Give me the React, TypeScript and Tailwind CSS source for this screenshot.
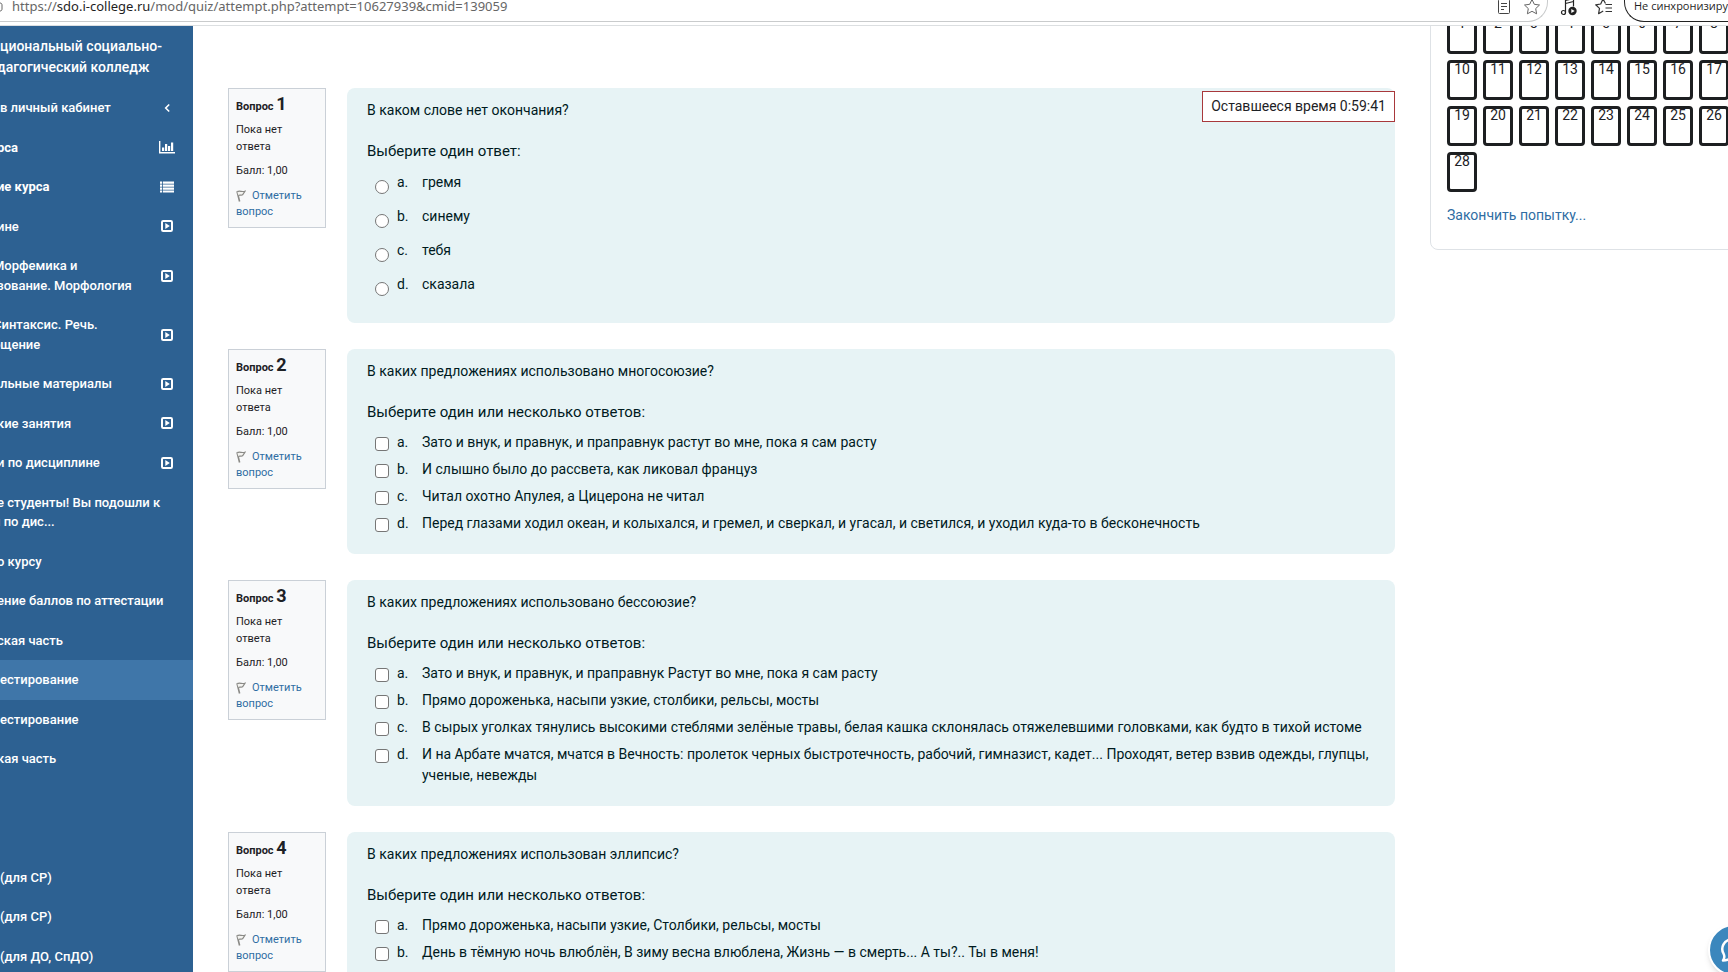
import React from "react";

type Option = { letter: string; text: string };
type Question = {
  number: number;
  kind: "radio" | "checkbox";
  text: string;
  prompt: string;
  options: Option[];
};

const ONE = "Выберите один ответ:";
const MANY = "Выберите один или несколько ответов:";

const questions: Question[] = [
  {
    number: 1,
    kind: "radio",
    text: "В каком слове нет окончания?",
    prompt: ONE,
    options: [
      { letter: "a.", text: "гремя" },
      { letter: "b.", text: "синему" },
      { letter: "c.", text: "тебя" },
      { letter: "d.", text: "сказала" },
    ],
  },
  {
    number: 2,
    kind: "checkbox",
    text: "В каких предложениях использовано многосоюзие?",
    prompt: MANY,
    options: [
      { letter: "a.", text: "Зато и внук, и правнук, и праправнук растут во мне, пока я сам расту" },
      { letter: "b.", text: "И слышно было до рассвета, как ликовал француз" },
      { letter: "c.", text: "Читал охотно Апулея, а Цицерона не читал" },
      {
        letter: "d.",
        text: "Перед глазами ходил океан, и колыхался, и гремел, и сверкал, и угасал, и светился, и уходил куда-то в бесконечность",
      },
    ],
  },
  {
    number: 3,
    kind: "checkbox",
    text: "В каких предложениях использовано бессоюзие?",
    prompt: MANY,
    options: [
      { letter: "a.", text: "Зато и внук, и правнук, и праправнук Растут во мне, пока я сам расту" },
      { letter: "b.", text: "Прямо дороженька, насыпи узкие, столбики, рельсы, мосты" },
      {
        letter: "c.",
        text: "В сырых уголках тянулись высокими стеблями зелёные травы, белая кашка склонялась отяжелевшими головками, как будто в тихой истоме",
      },
      {
        letter: "d.",
        text: "И на Арбате мчатся, мчатся в Вечность: пролеток черных быстротечность, рабочий, гимназист, кадет... Проходят, ветер взвив одежды, глупцы, ученые, невежды",
      },
    ],
  },
  {
    number: 4,
    kind: "checkbox",
    text: "В каких предложениях использован эллипсис?",
    prompt: MANY,
    options: [
      { letter: "a.", text: "Прямо дороженька, насыпи узкие, Столбики, рельсы, мосты" },
      { letter: "b.", text: "День в тёмную ночь влюблён, В зиму весна влюблена, Жизнь — в смерть... А ты?.. Ты в меня!" },
    ],
  },
];

type IconName = "chevron" | "chart" | "list" | "play";
type Cut = "none" | "part" | "most";
type NavLine = { text: string; cut: Cut };
type NavItem = { lines: NavLine[]; icon?: IconName; bold?: boolean; active?: boolean; gapAfter?: boolean };

// How far a line's first letter runs past the left edge of the scrolled sidebar.
const cutClass: Record<Cut, string> = { none: "", part: "-ml-[3px]", most: "-ml-[7px]" };

const navItems: NavItem[] = [
  { lines: [{ text: "в личный кабинет", cut: "none" }], icon: "chevron" },
  { lines: [{ text: "рса", cut: "part" }], icon: "chart", bold: true },
  { lines: [{ text: "ие курса", cut: "part" }], icon: "list", bold: true },
  { lines: [{ text: "ине", cut: "part" }], icon: "play" },
  {
    lines: [
      { text: "Морфемика и", cut: "most" },
      { text: "зование. Морфология", cut: "part" },
    ],
    icon: "play",
  },
  {
    lines: [
      { text: "Синтаксис. Речь.", cut: "most" },
      { text: "бщение", cut: "most" },
    ],
    icon: "play",
  },
  { lines: [{ text: "льные материалы", cut: "none" }], icon: "play" },
  { lines: [{ text: "кие занятия", cut: "part" }], icon: "play" },
  { lines: [{ text: "и по дисциплине", cut: "part" }], icon: "play" },
  {
    lines: [
      { text: "е студенты! Вы подошли к", cut: "part" },
      { text: "и по дис...", cut: "most" },
    ],
  },
  { lines: [{ text: "о курсу", cut: "part" }] },
  { lines: [{ text: "ение баллов по аттестации", cut: "part" }] },
  { lines: [{ text: "ская часть", cut: "part" }] },
  { lines: [{ text: "естирование", cut: "none" }], active: true },
  { lines: [{ text: "естирование", cut: "none" }] },
  { lines: [{ text: "кая часть", cut: "part" }], gapAfter: true },
  { lines: [{ text: "(для СР)", cut: "none" }] },
  { lines: [{ text: "(для СР)", cut: "none" }] },
  { lines: [{ text: "(для ДО, СпДО)", cut: "none" }] },
];

const quizRows: number[][] = [
  [1, 2, 3, 4, 5, 6, 7, 8],
  [10, 11, 12, 13, 14, 15, 16, 17],
  [19, 20, 21, 22, 23, 24, 25, 26],
  [28],
];

function NavIcon({ name }: { name: IconName }) {
  if (name === "chevron")
    return (
      <svg viewBox="0 0 16 14" className="h-3.5 w-4" fill="none" stroke="white" strokeWidth="1.6" aria-hidden="true">
        <path d="M10.200 3.500 6.700 7l3.500 3.500" />
      </svg>
    );
  if (name === "chart")
    return (
      <svg viewBox="0 0 16 14" className="h-3.5 w-4" fill="white" aria-hidden="true">
        <path d="M0 1h1.4v11H16v1.4H0zM3 7.500h2.200V11H3zM6 4h2.200v7H6zM9 6h2.200v5H9zM12 2.500h2.200V11H12z" />
      </svg>
    );
  if (name === "list")
    return (
      <svg viewBox="0 0 16 14" className="h-3.5 w-4" fill="white" aria-hidden="true">
        <path d="M1 1.500h2.200v2.200H1zM4 1.500h11v2.200H4zM1 4.500h2.200v2.200H1zM4 4.500h11v2.200H4zM1 7.500h2.200v2.200H1zM4 7.500h11v2.200H4zM1 10.500h2.200v2H1zM4 10.500h11v2H4z" />
      </svg>
    );
  return (
    <svg viewBox="0 0 16 14" className="h-3.5 w-4" aria-hidden="true">
      <rect x="3" y="2" width="10" height="10" rx="1.2" fill="none" stroke="white" strokeWidth="2" />
      <path d="M6.300 4v6L10.800 7z" fill="white" />
    </svg>
  );
}

function FlagIcon() {
  return (
    <svg viewBox="0 0 10 12" className="mr-1.5 inline-block h-3 w-2.5 align-text-bottom" fill="none" stroke="#8a8a86" aria-hidden="true">
      <path d="M1 1.2 3.6 11.5" strokeWidth="1.6" />
      <path d="M1.2 1.6c2.6-1.2 4.6.6 7.8-.4L6.600 4.800C5.200 5.800 4 4.400 2.400 5.400" strokeWidth="1.200" fill="#f3f3f0" />
    </svg>
  );
}

function BrowserBar() {
  return (
    <header className="relative z-10 flex h-[26px] shrink-0 items-start overflow-hidden border-b border-[#dcdfe1] bg-white">
      <div className="-mt-5 flex h-[42px] min-w-0 flex-1 items-end rounded-r-[20px] border-r border-b border-[#c9cbcc] pr-[6px] pb-[5px]">
        <svg viewBox="0 0 4 16" className="h-4 w-1 shrink-0" fill="none" stroke="#666" aria-hidden="true">
          <path d="M0 3c1.500 0 2 1 2 2v4c0 1-.5 2-2 2" />
        </svg>
        <span className="ml-2 min-w-0 flex-1 truncate font-['Noto_Sans',sans-serif] text-[13px] leading-5 text-[#666]">
          https://<span className="text-[#1f1f1f]">sdo.i-college.ru</span>/mod/quiz/attempt.php?attempt=10627939&amp;cmid=139059
        </span>
        <svg viewBox="0 0 14 18" className="mr-[12px] h-[18px] w-3.5 shrink-0" fill="none" stroke="#444" aria-hidden="true">
          <rect x="1.500" y="1.500" width="11" height="14" rx="1" />
          <path d="M4 5.500h6M4 8.500h6M4 11.500h3" />
        </svg>
        <svg viewBox="0 0 18 18" className="h-[18px] w-[18px] shrink-0" fill="none" stroke="#666" strokeLinejoin="round" aria-hidden="true">
          <path d="m9 1.500 2.300 4.800 5.200.7-3.800 3.600.9 5.200L9 13.300l-4.600 2.500.9-5.200L1.500 7l5.200-.7z" />
        </svg>
      </div>
      <svg viewBox="0 0 18 20" className="-mt-0.5 ml-3 h-5 w-[18px] shrink-0" fill="none" stroke="#222" strokeWidth="1.200" aria-hidden="true">
        <path d="M5.500 14.500V2.500l8-2v8M5.500 5.500l8-2" />
        <circle cx="3.500" cy="14.500" r="2" />
        <circle cx="12.500" cy="13" r="4.200" fill="#222" stroke="none" />
        <path d="m11.300 11 3.400 2-3.400 2z" fill="white" stroke="none" />
      </svg>
      <svg viewBox="0 0 18 18" className="-mt-0.5 ml-[17px] h-[18px] w-[18px] shrink-0" fill="none" stroke="#333" strokeWidth="1.200" strokeLinejoin="round" aria-hidden="true">
        <path d="M10.500 5.500 8 1 5.700 6l-5 .8 3.800 3.600-.9 5.300 4.600-2.700" />
        <path d="M10.500 6.500H17M10.500 10H17M10.500 13.500H17" />
      </svg>
      <div className="-mt-5 ml-[11px] h-[42px] w-[104px] shrink-0 overflow-hidden rounded-l-[20px] border-y border-l border-[#222] pt-[15px] pl-[9px]">
        <span className="block font-['Open_Sans',sans-serif] text-[11px] leading-5 whitespace-nowrap text-[#1f1f1f]">Не синхронизиру</span>
      </div>
    </header>
  );
}

function Sidebar() {
  return (
    <nav className="w-[193px] shrink-0 overflow-hidden bg-[#2d6192] text-white">
      <div className="pt-[10px] pb-[10px] text-sm font-medium leading-[21px] whitespace-nowrap">
        <div>циональный социально-</div>
        <div className="-ml-[3px]">дагогический колледж</div>
      </div>
      <ul className="text-[13px] leading-normal">
        {navItems.map((item, i) => (
          <li key={i} className={item.gapAfter ? "mb-[79px]" : ""}>
            <a
              href="#"
              className={`flex items-center justify-between py-2.5 pr-[18px] whitespace-nowrap ${item.active ? "bg-[#3f76a9]" : ""} ${item.bold ? "font-bold" : "font-medium"}`}
            >
              <span>
                {item.lines.map((line) => (
                  <span key={line.text} className={`block ${cutClass[line.cut]}`}>
                    {line.text}
                  </span>
                ))}
              </span>
              {item.icon && <NavIcon name={item.icon} />}
            </a>
          </li>
        ))}
      </ul>
    </nav>
  );
}

function QuestionInfo({ number }: { number: number }) {
  return (
    <div className="w-[98px] shrink-0 self-start border border-[#cad0d7] bg-[#f8f9fa] px-[7px] pt-1 pb-1.5 text-[11px] leading-normal text-[#1d2125]">
      <h3 className="text-[11px] leading-[22px] font-bold">
        Вопрос <span className="text-lg leading-[22px]">{number}</span>
      </h3>
      <p className="mt-1">Пока нет ответа</p>
      <p className="mt-2">Балл: 1,00</p>
      <a href="#" className="mt-2 block text-[#2f6da3]">
        <FlagIcon />
        Отметить вопрос
      </a>
    </div>
  );
}

function QuestionBlock({ q }: { q: Question }) {
  const radio = q.kind === "radio";
  return (
    <section className="flex gap-[21px]">
      <QuestionInfo number={q.number} />
      <div className={`relative min-w-0 flex-1 rounded-lg bg-[#e7f3f5] px-5 pt-3 text-[#001a1e] ${radio ? "pb-[27px]" : "pb-5"}`}>
        {radio && (
          <div className="absolute top-[3px] right-0 border border-[#a8383b] bg-white px-2 py-[4px] text-sm leading-[21px] text-[#1d2125]">
            Оставшееся время 0:59:41
          </div>
        )}
        <p className="text-sm leading-[21px]">{q.text}</p>
        <fieldset className="mt-[18px]">
          <legend className={`text-[15px] leading-6 ${radio ? "mb-[9px]" : "mb-2"}`}>{q.prompt}</legend>
          <div className={`flex flex-col pl-2 text-sm leading-[21px] ${radio ? "gap-3" : "gap-1.5"}`}>
            {q.options.map((o) => (
              <label key={o.letter} className="flex items-start">
                <input
                  type={q.kind}
                  name={`q${q.number}`}
                  className={`mr-2 h-3.5 w-3.5 shrink-0 appearance-none border border-[#767676] bg-white ${radio ? "mt-2 rounded-full" : "mt-[5px] rounded-[3px]"}`}
                />
                <span className="w-[25px] shrink-0">{o.letter}</span>
                <span>{o.text}</span>
              </label>
            ))}
          </div>
        </fieldset>
      </div>
    </section>
  );
}

function QuizNavigation() {
  return (
    <aside className="-mt-5 w-[298px] shrink-0 self-start overflow-hidden">
      <div className="w-80 rounded-bl-lg border border-[#dee2e6] px-4 pt-[7px] pb-[23px]">
        <div className="flex flex-col gap-1.5">
          {quizRows.map((row) => (
            <div key={row[0]} className="flex gap-1.5">
              {row.map((n) => (
                <a
                  key={n}
                  href="#"
                  className="h-10 w-[30px] shrink-0 rounded border-3 border-[#1d1f21] text-center text-sm leading-[12px] text-[#1d2125]"
                >
                  {n}
                </a>
              ))}
            </div>
          ))}
        </div>
        <a href="#" className="mt-[13px] block text-sm leading-[21px] text-[#2f6da3]">
          Закончить попытку...
        </a>
      </div>
    </aside>
  );
}

export default function App() {
  return (
    <div className="relative flex h-screen flex-col overflow-hidden bg-white font-[Roboto,sans-serif]">
      <BrowserBar />
      <div className="flex min-h-0 flex-1 overflow-hidden">
        <Sidebar />
        <main className="flex min-w-0 flex-1 flex-col gap-[26px] px-[35px] pt-[62px]">
          {questions.map((q) => (
            <QuestionBlock key={q.number} q={q} />
          ))}
        </main>
        <QuizNavigation />
      </div>
      <button
        type="button"
        aria-label="Чат"
        className="absolute -right-8 -bottom-1 flex h-[52px] w-[52px] items-center justify-center rounded-full border-2 border-white bg-[#3b87bd] shadow-md"
      >
        <svg viewBox="0 0 30 30" className="h-[30px] w-[30px]" fill="none" stroke="white" strokeWidth="2.500" strokeLinejoin="round" aria-hidden="true">
          <path d="M4.500 18.500A11 10 0 1 1 11 23.500c-2 1.500-4 2-7 2 1.500-2 2-4 .5-7z" />
        </svg>
      </button>
    </div>
  );
}
